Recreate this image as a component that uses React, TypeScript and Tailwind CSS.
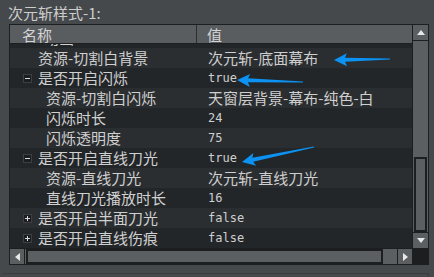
const cjk = { fontFamily: '"Noto Sans CJK SC", "Noto Sans", sans-serif' };
const mono = { fontFamily: '"DejaVu Sans Mono", "Liberation Mono", monospace' };

type Row = {
  name: string;
  value: string;
  indent: number;
  toggle?: '-' | '+';
  code?: boolean;
};

const rows: Row[] = [
  { name: '资源-切割白背景', value: '次元斩-底面幕布', indent: 38 },
  { name: '是否开启闪烁', value: 'true', indent: 38, toggle: '-', code: true },
  { name: '资源-切割白闪烁', value: '天窗层背景-幕布-纯色-白', indent: 46 },
  { name: '闪烁时长', value: '24', indent: 46, code: true },
  { name: '闪烁透明度', value: '75', indent: 46, code: true },
  { name: '是否开启直线刀光', value: 'true', indent: 38, toggle: '-', code: true },
  { name: '资源-直线刀光', value: '次元斩-直线刀光', indent: 46 },
  { name: '直线刀光播放时长', value: '16', indent: 46, code: true },
  { name: '是否开启半面刀光', value: 'false', indent: 38, toggle: '+', code: true },
  { name: '是否开启直线伤痕', value: 'false', indent: 38, toggle: '+', code: true },
];

function Toggle({ sign }: { sign: '-' | '+' }) {
  return (
    <span className="absolute left-[13px] top-[6px] w-[9px] h-[9px] bg-[#1b1d1f] border border-[#3c4043] flex items-center justify-center">
      <svg width="7" height="7" viewBox="0 0 7 7">
        <rect x="1" y="3" width="5" height="1" fill="#d8d8d8" />
        {sign === '+' && <rect x="3" y="1" width="1" height="5" fill="#d8d8d8" />}
      </svg>
    </span>
  );
}

function TreeRow({ row, light }: { row: Row; light: boolean }) {
  return (
    <div className={`relative flex h-[20px] items-center ${light ? 'bg-[#2b2e31]' : 'bg-[#232629]'}`}>
      {row.toggle && <Toggle sign={row.toggle} />}
      <div className="w-[187px] shrink-0 text-[15px] leading-[20px] text-[#d0d0d0] whitespace-nowrap" style={{ ...cjk, paddingLeft: row.indent - 10 }}>
        {row.name}
      </div>
      <div
        className={`pl-[11px] whitespace-nowrap text-[#cfcfcf] ${row.code ? 'text-[12px]' : 'text-[15px]'} leading-[20px]`}
        style={row.code ? mono : cjk}
      >
        {row.value}
      </div>
    </div>
  );
}

function Arrow({ tip, tail, head = 13, half = 6.5, shaft = 2 }: { tip: [number, number]; tail: [number, number]; head?: number; half?: number; shaft?: number }) {
  const dx = tail[0] - tip[0];
  const dy = tail[1] - tip[1];
  const len = Math.hypot(dx, dy);
  const ux = dx / len;
  const uy = dy / len;
  const px = -uy;
  const py = ux;
  const bx = tip[0] + ux * head;
  const by = tip[1] + uy * head;
  const nx = tip[0] + ux * (head - 2);
  const ny = tip[1] + uy * (head - 2);
  const pts = [
    [tip[0], tip[1]],
    [bx + px * half, by + py * half],
    [nx + px * shaft, ny + py * shaft],
    [tail[0] + px * 0.4, tail[1] + py * 0.4],
    [tail[0] - px * 0.4, tail[1] - py * 0.4],
    [nx - px * shaft, ny - py * shaft],
    [bx - px * half, by - py * half],
  ]
    .map((p) => p.join(','))
    .join(' ');
  return <polygon points={pts} fill="#0b92f2" />;
}

export default function App() {
  return (
    <div className="relative w-[434px] h-[277px] bg-[#46494c] overflow-hidden">
      <div className="h-[24px] pl-[8px] pt-[3px] text-[15px] leading-[20px] text-[#cdcdcd]" style={cjk}>
        次元斩样式-1:
      </div>

      <div className="ml-[9px] w-[420px] border border-[#1c1e20] bg-[#232629]">
        <div className="flex">
          <div className="w-[402px]">
            <div className="flex h-[19px] bg-[#595d60] border-b border-[#1c1e20] text-[15px] leading-[19px] text-[#d4d4d4]" style={cjk}>
              <div className="w-[187px] pl-[12px] border-r border-[#2c2f32]">名称</div>
              <div className="pl-[10px]">值</div>
            </div>
            <div className="h-[204px] overflow-hidden">
              <div className="relative flex h-[20px] items-center bg-[#232629] mt-[-16px]">
                <div className="pl-[34px] text-[15px] leading-[20px] text-[#d0d0d0]" style={cjk}>
                  动画
                </div>
              </div>
              {rows.map((r, i) => (
                <TreeRow key={r.name} row={r} light={i % 2 === 0 ? true : i === 8} />
              ))}
            </div>
          </div>

          {/* vertical scrollbar */}
          <div className="w-[16px] flex flex-col bg-[#5b5f62] border-l border-[#1c1e20]">
            <div className="h-[16px] flex items-center justify-center border-b border-[#1c1e20]">
              <svg width="8" height="5" viewBox="0 0 8 5">
                <polygon points="4,0 8,5 0,5" fill="#e8e8e8" />
              </svg>
            </div>
            <div className="flex-1 flex flex-col px-[1px]">
              <div className="h-[116px]" />
              <div className="flex-1 border-[2px] border-[#1c1e20] bg-[#5b5f62]" />
            </div>
            <div className="h-[16px] flex items-center justify-center border-t border-[#1c1e20]">
              <svg width="8" height="5" viewBox="0 0 8 5">
                <polygon points="0,0 8,0 4,5" fill="#e8e8e8" />
              </svg>
            </div>
          </div>
        </div>

        {/* horizontal scrollbar */}
        <div className="flex h-[16px] border-t border-[#1c1e20]">
          <div className="w-[402px] flex bg-[#5b5f62]">
            <div className="w-[15px] flex items-center justify-center border-r border-[#1c1e20]">
              <svg width="5" height="8" viewBox="0 0 5 8">
                <polygon points="5,0 5,8 0,4" fill="#e8e8e8" />
              </svg>
            </div>
            <div className="w-[357px] ml-[1px] border-[2px] border-[#1c1e20]" />
            <div className="flex-1" />
            <div className="w-[15px] flex items-center justify-center border-l border-[#1c1e20]">
              <svg width="5" height="8" viewBox="0 0 5 8">
                <polygon points="0,0 5,4 0,8" fill="#e8e8e8" />
              </svg>
            </div>
          </div>
          <div className="flex-1 bg-[#1c1e20]" />
        </div>
      </div>

      <div className="mt-[8px] ml-[2px] w-[427px] h-[10px] border-t border-r border-[#3a3d40] rounded-tr-[3px]" />

      <svg className="absolute inset-0 pointer-events-none" width="434" height="277">
        <Arrow tip={[334, 60]} tail={[390, 59]} />
        <Arrow tip={[237, 80]} tail={[303, 82]} />
        <Arrow tip={[242, 162]} tail={[314, 147]} />
      </svg>
    </div>
  );
}
